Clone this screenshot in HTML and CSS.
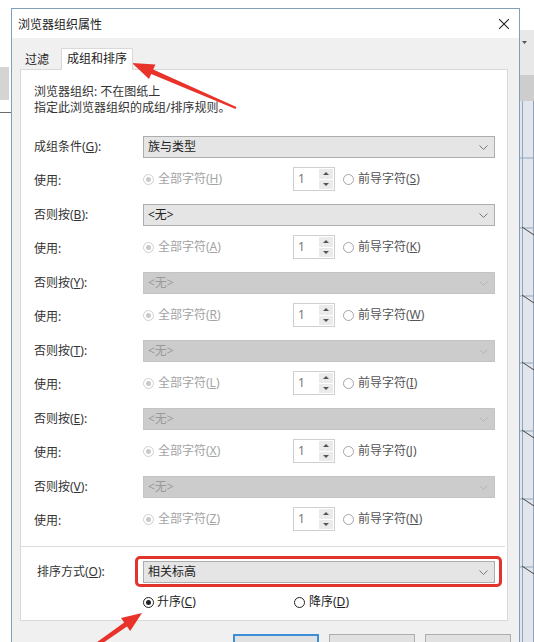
FILE: index.html
```html
<!DOCTYPE html>
<html lang="zh-CN">
<head>
    <meta charset="UTF-8">
    <meta name="viewport" content="width=device-width, initial-scale=1.0">
    <title>浏览器组织属性</title>
    <link rel="stylesheet" href="styles.css">
</head>
<body>

<div class="screen">
    <!-- background of the application behind the dialog -->
    <div class="side-left">
        <div class="side-band"></div>
        <div class="side-rule"></div>
    </div>

    <div class="dialog">
        <div class="titlebar">
            <span class="title">浏览器组织属性</span>
            <svg class="close" width="10" height="10" viewBox="0 0 10 10"><path d="M0 0L10 10M10 0L0 10" stroke="#222" stroke-width="1.1"/></svg>
        </div>

        <div class="dialog-body">
            <div class="tabs">
                <div class="tab">过滤</div>
                <div class="tab active">成组和排序</div>
            </div>

            <div class="panel">
                <div class="info">
                    <p>浏览器组织: 不在图纸上</p>
                    <p>指定此浏览器组织的成组/排序规则。</p>
                </div>

                <div class="groups">
                    <div class="group">
                        <div class="row">
                            <span class="label">成组条件(<u>G</u>):</span>
                            <div class="select"><span>族与类型</span><svg width="9" height="5" viewBox="0 0 9 5"><path d="M0.5 0.5L4.5 4.5L8.5 0.5" fill="none" stroke="#777"/></svg></div>
                        </div>
                        <div class="row use">
                            <span class="label">使用:</span>
                            <span class="opt first off"><span class="radio off checked"></span><span>全部字符(<u>H</u>)</span></span>
                            <div class="spin"><span class="spin-val">1</span><span class="spin-btns"><span class="up"></span><span class="down"></span></span></div>
                            <span class="opt"><span class="radio soft"></span><span>前导字符(<u>S</u>)</span></span>
                        </div>
                    </div>

                    <div class="group">
                        <div class="row">
                            <span class="label">否则按(<u>B</u>):</span>
                            <div class="select"><span>&lt;无&gt;</span><svg width="9" height="5" viewBox="0 0 9 5"><path d="M0.5 0.5L4.5 4.5L8.5 0.5" fill="none" stroke="#777"/></svg></div>
                        </div>
                        <div class="row use">
                            <span class="label">使用:</span>
                            <span class="opt first off"><span class="radio off checked"></span><span>全部字符(<u>A</u>)</span></span>
                            <div class="spin"><span class="spin-val">1</span><span class="spin-btns"><span class="up"></span><span class="down"></span></span></div>
                            <span class="opt"><span class="radio soft"></span><span>前导字符(<u>K</u>)</span></span>
                        </div>
                    </div>

                    <div class="group">
                        <div class="row">
                            <span class="label">否则按(<u>Y</u>):</span>
                            <div class="select disabled"><span>&lt;无&gt;</span><svg width="9" height="5" viewBox="0 0 9 5"><path d="M0.5 0.5L4.5 4.5L8.5 0.5" fill="none" stroke="#b5b5b5"/></svg></div>
                        </div>
                        <div class="row use">
                            <span class="label">使用:</span>
                            <span class="opt first off"><span class="radio off checked"></span><span>全部字符(<u>R</u>)</span></span>
                            <div class="spin"><span class="spin-val">1</span><span class="spin-btns"><span class="up"></span><span class="down"></span></span></div>
                            <span class="opt"><span class="radio soft"></span><span>前导字符(<u>W</u>)</span></span>
                        </div>
                    </div>

                    <div class="group">
                        <div class="row">
                            <span class="label">否则按(<u>T</u>):</span>
                            <div class="select disabled"><span>&lt;无&gt;</span><svg width="9" height="5" viewBox="0 0 9 5"><path d="M0.5 0.5L4.5 4.5L8.5 0.5" fill="none" stroke="#b5b5b5"/></svg></div>
                        </div>
                        <div class="row use">
                            <span class="label">使用:</span>
                            <span class="opt first off"><span class="radio off checked"></span><span>全部字符(<u>L</u>)</span></span>
                            <div class="spin"><span class="spin-val">1</span><span class="spin-btns"><span class="up"></span><span class="down"></span></span></div>
                            <span class="opt"><span class="radio soft"></span><span>前导字符(<u>I</u>)</span></span>
                        </div>
                    </div>

                    <div class="group">
                        <div class="row">
                            <span class="label">否则按(<u>E</u>):</span>
                            <div class="select disabled"><span>&lt;无&gt;</span><svg width="9" height="5" viewBox="0 0 9 5"><path d="M0.5 0.5L4.5 4.5L8.5 0.5" fill="none" stroke="#b5b5b5"/></svg></div>
                        </div>
                        <div class="row use">
                            <span class="label">使用:</span>
                            <span class="opt first off"><span class="radio off checked"></span><span>全部字符(<u>X</u>)</span></span>
                            <div class="spin"><span class="spin-val">1</span><span class="spin-btns"><span class="up"></span><span class="down"></span></span></div>
                            <span class="opt"><span class="radio soft"></span><span>前导字符(<u>J</u>)</span></span>
                        </div>
                    </div>

                    <div class="group">
                        <div class="row">
                            <span class="label">否则按(<u>V</u>):</span>
                            <div class="select disabled"><span>&lt;无&gt;</span><svg width="9" height="5" viewBox="0 0 9 5"><path d="M0.5 0.5L4.5 4.5L8.5 0.5" fill="none" stroke="#b5b5b5"/></svg></div>
                        </div>
                        <div class="row use">
                            <span class="label">使用:</span>
                            <span class="opt first off"><span class="radio off checked"></span><span>全部字符(<u>Z</u>)</span></span>
                            <div class="spin"><span class="spin-val">1</span><span class="spin-btns"><span class="up"></span><span class="down"></span></span></div>
                            <span class="opt"><span class="radio soft"></span><span>前导字符(<u>N</u>)</span></span>
                        </div>
                    </div>
                </div>

                <!-- sort section -->
                <div class="sort">
                    <div class="row">
                        <span class="label sort-label">排序方式(<u>O</u>):</span>
                        <div class="mark">
                            <div class="select"><span>相关标高</span><svg width="9" height="5" viewBox="0 0 9 5"><path d="M0.5 0.5L4.5 4.5L8.5 0.5" fill="none" stroke="#777"/></svg></div>
                        </div>
                    </div>
                    <div class="order">
                        <span class="opt wide"><span class="radio dark checked"></span><span>升序(<u>C</u>)</span></span>
                        <span class="opt"><span class="radio dark"></span><span>降序(<u>D</u>)</span></span>
                    </div>
                </div>
            </div>

            <!-- the dialog buttons are cut off by the bottom of the screenshot -->
            <div class="buttons">
                <button class="btn default"></button>
                <button class="btn"></button>
                <button class="btn"></button>
            </div>
        </div>
    </div>

    <div class="side-right">
        <svg width="15" height="642" viewBox="0 0 15 642">
            <rect x="0" y="30" width="15" height="45" fill="#e8e8e8"/>
            <path d="M2 41L7 41L4.5 44Z" fill="#555"/>
            <rect x="0" y="75" width="15" height="26" fill="#cdcdcd"/>
            <rect x="0" y="101" width="15" height="541" fill="#e2e6ec"/>
            <path d="M2.5 101V642M13.5 101V642" stroke="#8ea6bf" stroke-width="1"/>
            <path d="M0 158H15M0 228H15M0 296H15M0 363H15M0 431H15M0 499H15M0 567H15" stroke="#8ea6bf" stroke-width="1"/>
            <path d="M2 227L14 235M2 295L14 303M2 362L14 370M2 430L14 438M2 498L14 506M2 566L14 574" stroke="#444" stroke-width="1"/>
        </svg>
    </div>

    <!-- red annotation arrows drawn over the screenshot -->
    <svg class="arrows" width="534" height="642" viewBox="0 0 534 642">
        <polygon points="132,63 155.4,64.4 153.2,69.4 236.4,107.1 235.6,108.9 151.2,74 149,79" fill="#e8322a"/>
        <polygon points="142,613 130.2,631.1 127,626.5 96.2,647.6 93.8,644.4 124.2,622.5 121,617.9" fill="#e8322a"/>
    </svg>
</div>

</body>
</html>
```

FILE: styles.css
```css
* {
    box-sizing: border-box;
}

body {
    margin: 0;
    font-family: "Noto Sans", "Noto Sans CJK SC", sans-serif;
    font-size: 12px;
    line-height: 16px;
    color: #333;
    background-color: #fff;
}

.screen {
    position: relative;
    display: flex;
    align-items: flex-start;
    width: 534px;
    height: 642px;
    overflow: hidden;
}

.side-left {
    width: 11px;
    flex: none;
}

.side-band {
    margin-top: 67px;
    width: 9px;
    height: 33px;
    background-color: #d4d4d4;
}

.side-rule {
    margin-top: 12px;
    height: 1px;
    background-color: #6b6b6b;
}

.side-right {
    flex: 1;
    line-height: 0;
}

.dialog {
    width: 509px;
    flex: none;
    margin-top: 8px;
    border: 1px solid #7f9fba;
    border-bottom: none;
    background-color: #f0f0f0;
}

.titlebar {
    height: 29px;
    background-color: #fff;
    display: flex;
    align-items: center;
    justify-content: space-between;
    padding: 0 10px 0 6px;
    color: #222;
}

.title {
    margin-top: 2px;
}

.dialog-body {
    padding: 10px 11px 20px 8px;
}

.tabs {
    display: flex;
    align-items: flex-end;
    height: 21px;
}

.tab {
    width: 41px;
    height: 19px;
    padding-left: 5px;
    line-height: 19px;
    color: #222;
}

.tab.active {
    position: relative;
    z-index: 1;
    width: 72px;
    height: 22px;
    margin-bottom: -1px;
    padding-left: 5px;
    line-height: 20px;
    background-color: #fff;
    border: 1px solid #d9d9d9;
    border-bottom: none;
}

.panel {
    width: 488px;
    padding: 14px 0 10px 13px;
    background-color: #fff;
    border: 1px solid #d9d9d9;
}

.info p {
    margin: 0;
    color: #333;
}

.groups {
    margin-top: 20px;
}

.group {
    display: flex;
    flex-direction: column;
    gap: 9px;
    margin-bottom: 13px;
}

.group:last-child {
    margin-bottom: 0;
}

.row {
    display: flex;
    align-items: center;
}

.label {
    width: 109px;
    flex: none;
    color: #333;
}

.select {
    width: 352px;
    height: 22px;
    padding: 0 6px 0 4px;
    display: flex;
    align-items: center;
    justify-content: space-between;
    background-color: #e5e5e5;
    border: 1px solid #adadad;
    color: #222;
}

.select.disabled {
    background-color: #cccccc;
    border-color: #c4c4c4;
    color: #9a9a9a;
}

.use {
    height: 24px;
}

.use .label {
    margin-top: 3px;
}

.opt {
    display: flex;
    align-items: center;
    gap: 4px;
    color: #555;
}

.opt.first {
    width: 150px;
}

.opt.off {
    color: #a3a3a3;
}

.radio {
    position: relative;
    width: 11px;
    height: 11px;
    flex: none;
    border-radius: 50%;
    border: 1px solid #333;
    background-color: #fff;
}

.radio.checked::after {
    content: "";
    position: absolute;
    top: 2px;
    left: 2px;
    width: 5px;
    height: 5px;
    border-radius: 50%;
    background-color: #222;
}

.radio.off {
    border-color: #cfcfcf;
}

.radio.off.checked::after {
    background-color: #c8c8c8;
}

.radio.soft {
    border-color: #a5a5a5;
}

.spin {
    width: 42px;
    height: 24px;
    margin-right: 8px;
    display: flex;
    border: 1px solid #cfcfcf;
    background-color: #fff;
}

.spin-val {
    flex: 1;
    padding-left: 4px;
    line-height: 22px;
    color: #777;
}

.spin-btns {
    width: 15px;
    display: flex;
    flex-direction: column;
    gap: 1px;
    padding: 1px 1px 1px 0;
}

.spin-btns span {
    flex: 1;
    display: flex;
    align-items: center;
    justify-content: center;
    background-color: #ebebeb;
}

.spin-btns .up::before,
.spin-btns .down::before {
    content: "";
    border-left: 3px solid transparent;
    border-right: 3px solid transparent;
}

.spin-btns .up::before {
    border-bottom: 3px solid #555;
}

.spin-btns .down::before {
    border-top: 3px solid #555;
}

.sort {
    margin: 15px 2px 0 -13px;
    padding: 9px 0 0 16px;
    border-top: 1px solid #dcdcdc;
}

.sort-label {
    width: 98px;
}

.mark {
    padding: 2px 4px 1px 5px;
    border: 3px solid #e0342c;
    border-radius: 5px;
}

.order {
    display: flex;
    margin-top: 7px;
    padding-left: 106px;
    height: 16px;
}

.opt.wide {
    width: 151px;
    gap: 3px;
    color: #222;
}

.order .opt {
    color: #222;
}

.radio.dark {
    border-color: #222;
}

.buttons {
    display: flex;
    justify-content: flex-end;
    gap: 10px;
    margin: 13px -3px 0 0;
}

.btn {
    width: 86px;
    height: 23px;
    padding: 0;
    font-family: inherit;
    font-size: 12px;
    color: #222;
    background-color: #e1e1e1;
    border: 1px solid #adadad;
}

.btn.default {
    border: 2px solid #3c8fd6;
}

.arrows {
    position: absolute;
    top: 0;
    left: 0;
    pointer-events: none;
}
```
